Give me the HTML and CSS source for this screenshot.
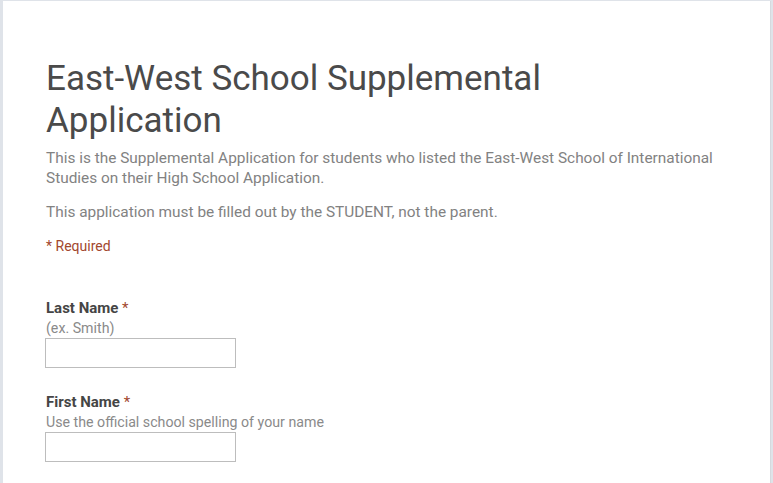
FILE: index.html
```html
<!DOCTYPE html>
<html>
<head>
<meta charset="utf-8">
<link rel="stylesheet" href="styles.css">
</head>
<body>
<div class="card">
  <h1 class="title">East-West School Supplemental Application</h1>
  <div class="desc">
    <p>This is the Supplemental Application for students who listed the East-West School of International Studies on their High School Application.</p>
    <p>This application must be filled out by the STUDENT, not the parent.</p>
  </div>
  <div class="required-note">* Required</div>
  <div class="question first-q">
    <div class="q-label">Last Name <span class="star">*</span></div>
    <div class="q-help">(ex. Smith)</div>
    <input class="q-input" type="text">
  </div>
  <div class="question">
    <div class="q-label">First Name <span class="star">*</span></div>
    <div class="q-help">Use the official school spelling of your name</div>
    <input class="q-input" type="text">
  </div>
</div>
</body>
</html>
```
FILE: styles.css
```css
html, body {
  margin: 0;
  padding: 0;
}
body {
  background: #dfe3e9;
  font-family: Roboto, "Liberation Sans", sans-serif;
  padding: 1px 2px 0 3px;
  height: 483px;
  box-sizing: border-box;
  overflow: hidden;
}
.card {
  background: #fff;
  border-right: 1px solid #d6d9de;
  height: 100%;
  padding: 57px 40px 0 43px;
  box-sizing: border-box;
}
.title {
  font-size: 35px;
  font-weight: 400;
  color: #4a4a4a;
  line-height: 42px;
  margin: 0;
  width: 540px;
}
.desc {
  margin-top: 6px;
  color: #828282;
  font-size: 15.4px;
  line-height: 20px;
}
.desc p {
  margin: 0 0 14px 0;
}
.required-note {
  color: #a2472e;
  font-size: 14px;
  line-height: 20px;
  margin-top: 3px;
}
.question {
  margin-top: 24px;
}
.first-q {
  margin-top: 42px;
}
.q-label {
  font-weight: 700;
  font-size: 15px;
  color: #454545;
  line-height: 20px;
  margin-bottom: 1px;
}
.star {
  color: #a2472e;
  font-weight: 400;
}
.q-help {
  font-size: 14.2px;
  color: #8a8a8a;
  line-height: 19px;
}
.q-input {
  display: block;
  width: 191px;
  height: 30px;
  box-sizing: border-box;
  border: 1px solid #bdbdbd;
  margin: 0 0 0 -1px;
  padding: 0;
  background: #fff;
}
```
